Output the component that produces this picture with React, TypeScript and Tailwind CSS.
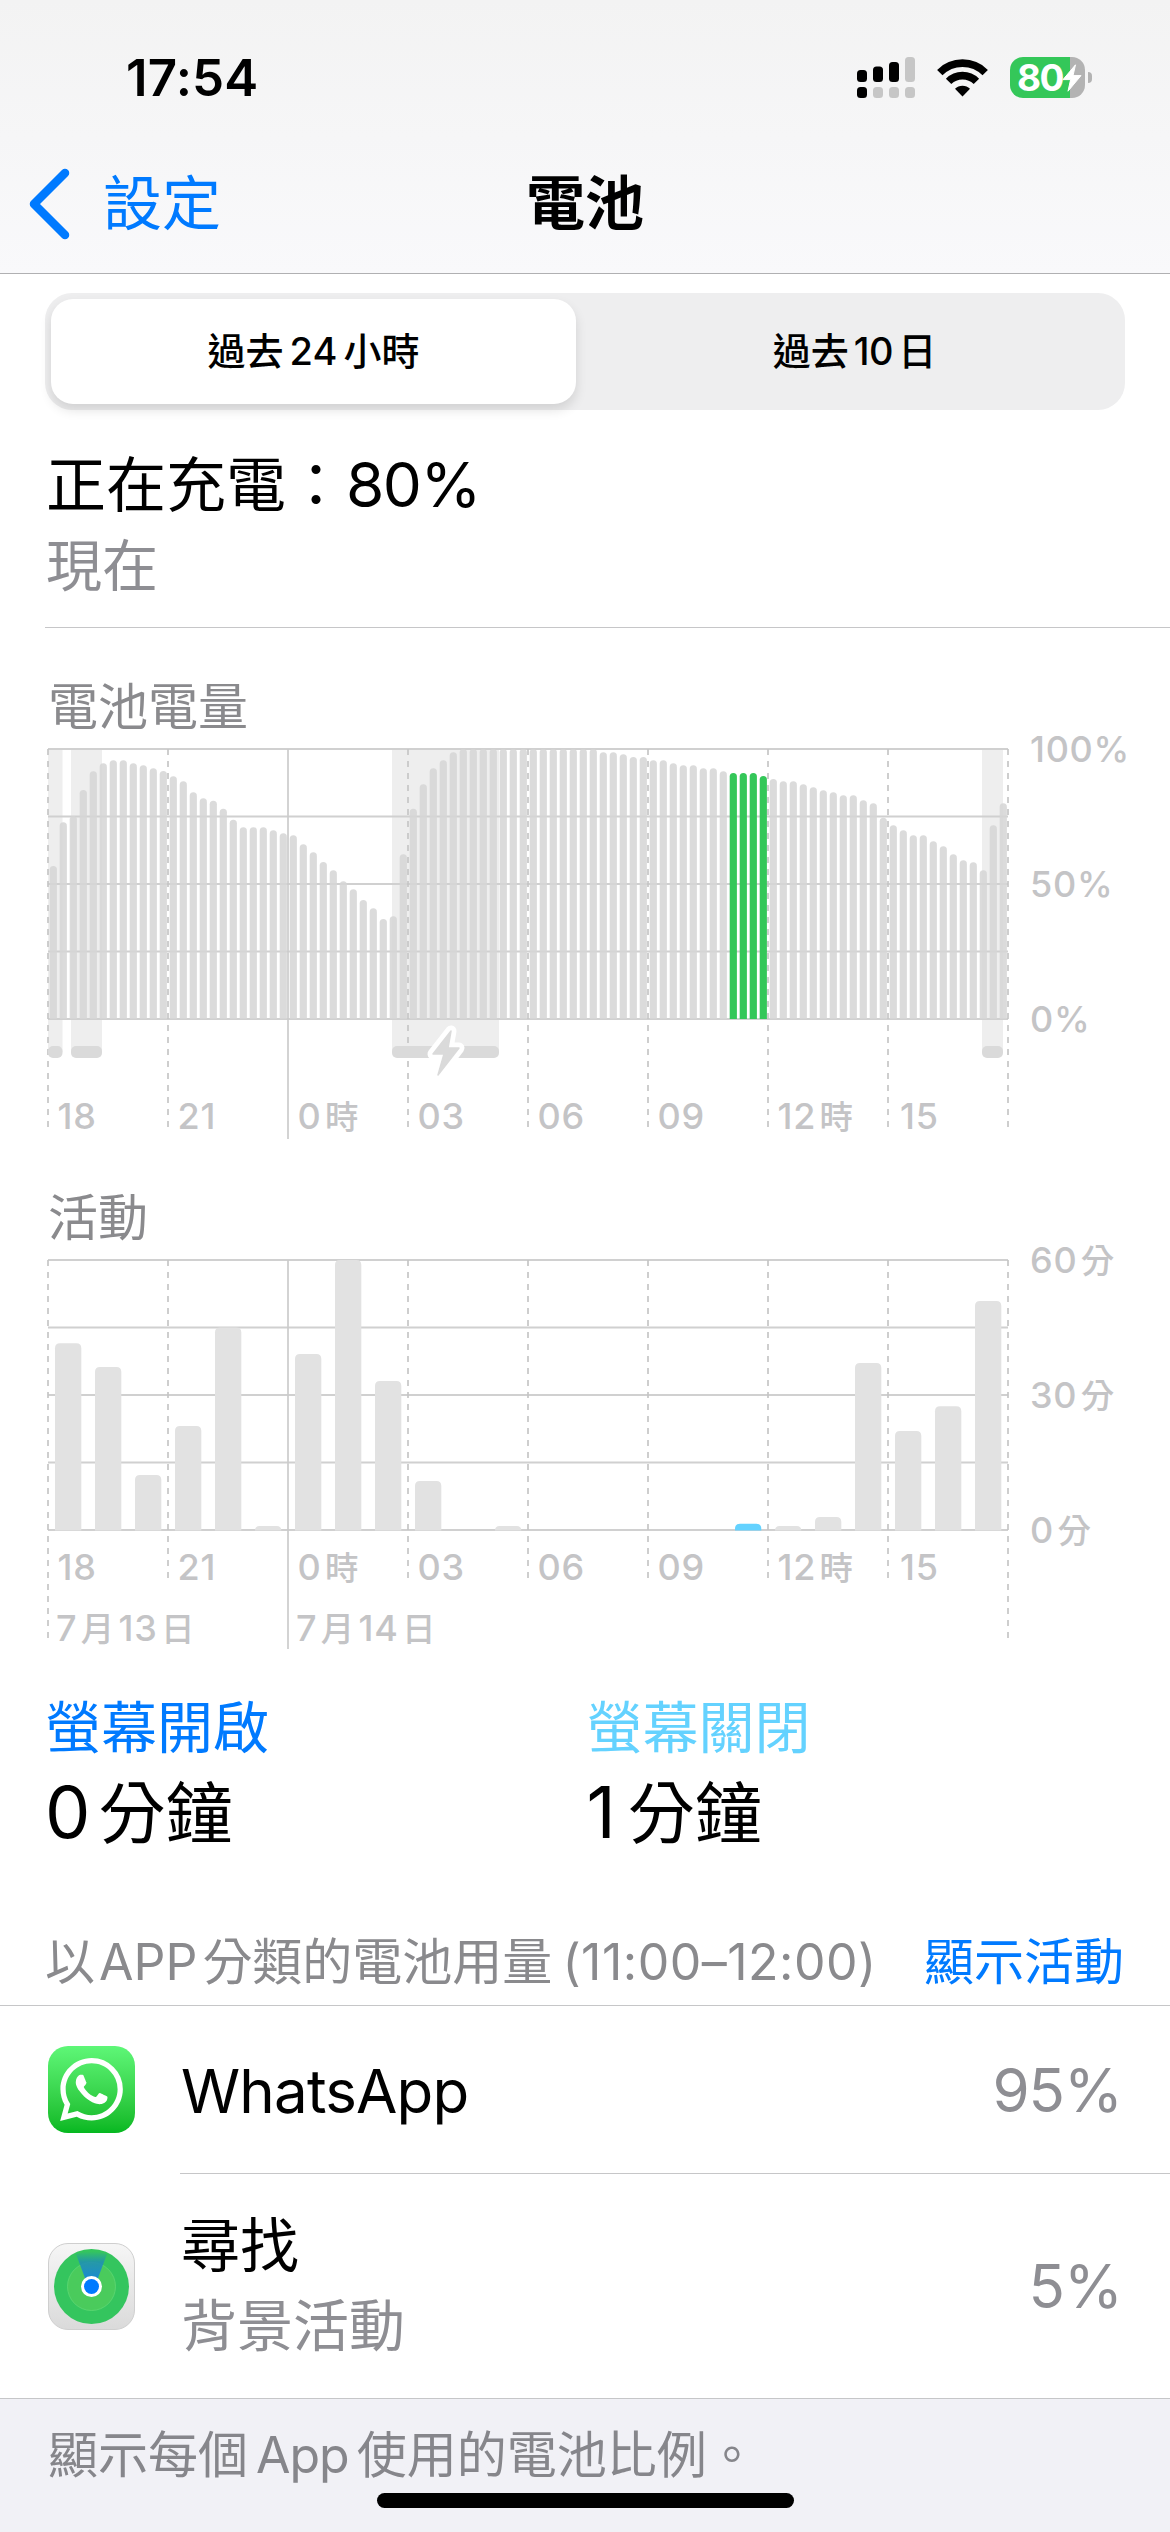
import React from "react";
import { SiWhatsapp } from "react-icons/si";

const LEFT = 48;
const LEVEL_TOP = 749;
const ACTIVITY_TOP = 1260;
const PLOT_H = 270;

// Battery level every fifteen minutes, as the bar's distance from 100 % in thirds of a pixel.
const LEVEL_DROPS = [
  351, 220, 201, 123, 67, 43, 34, 34, 43, 49, 58, 66,
  82, 97, 130, 148, 155, 179, 212, 235, 235, 235, 244, 253,
  259, 286, 310, 339, 364, 397, 421, 453, 478, 510, 502, 316,
  179, 106, 58, 34, 10, 0, 0, 0, 0, 0, 0, 0,
  0, 0, 0, 0, 0, 0, 0, 10, 10, 16, 24, 24,
  34, 34, 43, 49, 49, 58, 58, 67, 72, 72, 72, 81,
  90, 97, 97, 106, 115, 124, 130, 139, 139, 154, 163, 206,
  229, 244, 259, 259, 277, 292, 316, 334, 340, 364, 229, 163,
];

const CHARGING = [
  { x: 48, w: 14.5 },
  { x: 71, w: 31 },
  { x: 392, w: 107 },
  { x: 982, w: 21 },
];

// Minutes of activity for each hour.
const ACTIVITY = [
  41.5, 36.2, 12.2, 23.1, 45, 0.9, 39.1, 60, 33.1, 10.9, 0, 0.9,
  0, 0, 0, 0, 0, 1.4, 0.9, 2.9, 37.1, 22, 27.5, 50.9,
];

const HOURS = ["18", "21", "0時", "03", "06", "09", "12時", "15"];

function roundedTop(x: number, y: number, w: number, bottom: number, r: number) {
  const k = Math.min(r, bottom - y);
  return `M${x} ${bottom}V${y + k}Q${x} ${y} ${x + k} ${y}H${x + w - k}Q${x + w} ${y} ${x + w} ${y + k}V${bottom}Z`;
}

function AxisText({ x, cy, text }: { x: number; cy: number; text: string }) {
  const parts = text.split(/([月日時分])/).filter(Boolean);
  return (
    <text x={x} y={cy + 13} fontSize={36} fontWeight={500} fill="#c4c4c6" letterSpacing={0.7}>
      {parts.map((t, i) => (
        <tspan key={i} dx={i ? 3.5 : 0} fontSize={/[月日時分]/.test(t) ? 33.5 : 36}>
          {t}
        </tspan>
      ))}
    </text>
  );
}

function Grid({ top, dashEnd, edgeEnd, solidEnd }: { top: number; dashEnd: number; edgeEnd: number; solidEnd: number }) {
  return (
    <g>
      <g stroke="#d0d0d0" strokeWidth={2}>
        {[0, 1, 2, 3, 4].map((i) => (
          <line key={i} x1={LEFT} x2={1008} y1={top + i * 67.5} y2={top + i * 67.5} />
        ))}
      </g>
      <g stroke="#c6c6c6" strokeWidth={1.7}>
        {Array.from({ length: 9 }, (_, i) => {
          const x = LEFT + i * 120;
          const end = i === 2 ? solidEnd : i === 0 || i === 8 ? edgeEnd : dashEnd;
          return (
            <line
              key={x}
              x1={x}
              x2={x}
              y1={top}
              y2={end}
              stroke={i === 2 ? "#cccccc" : undefined}
              strokeDasharray={i === 2 ? undefined : "6 6"}
            />
          );
        })}
      </g>
    </g>
  );
}

function HourLabels({ cy }: { cy: number }) {
  return (
    <>
      {HOURS.map((h, i) => (
        <AxisText key={h} x={(h === "15" ? 60 : 57.5) + i * 120} cy={cy} text={h} />
      ))}
    </>
  );
}

function LevelChart() {
  const bottom = LEVEL_TOP + PLOT_H;
  const bolt = "M451 1031L433 1054H444L438 1075L459 1048H448Z";
  return (
    <svg className="block overflow-visible" width="1170" height="410" viewBox="0 737 1170 410">
      {CHARGING.map((c) => (
        <rect key={c.x} x={c.x} y={LEVEL_TOP} width={c.w} height={303} fill="#eeeeee" />
      ))}
      <Grid top={LEVEL_TOP} dashEnd={1133} edgeEnd={1133} solidEnd={1139} />
      {LEVEL_DROPS.map((d, i) => {
        const selected = i >= 68 && i < 72;
        return (
          <path
            key={i}
            d={roundedTop(49.7 + i * 10, LEVEL_TOP + d / 3, 7.2, bottom, 3.6)}
            fill={selected ? "#34c759" : "#d5d5d5"}
            opacity={selected ? 1 : 0.86}
          />
        );
      })}
      {CHARGING.map((c) => (
        <rect key={c.x} x={c.x} y={1046} width={c.w} height={12} rx={5} fill="#dadada" />
      ))}
      <path d={bolt} fill="#fff" stroke="#fff" strokeWidth={11} strokeLinejoin="round" />
      <path d={bolt} fill="#dadada" stroke="#dadada" strokeWidth={1.5} strokeLinejoin="round" />
      <AxisText x={1030} cy={749} text="100%" />
      <AxisText x={1030} cy={884} text="50%" />
      <AxisText x={1030} cy={1019} text="0%" />
      <HourLabels cy={1116} />
    </svg>
  );
}

function ActivityChart() {
  const bottom = ACTIVITY_TOP + PLOT_H;
  return (
    <svg className="block overflow-visible" width="1170" height="404" viewBox="0 1248 1170 404">
      <Grid top={ACTIVITY_TOP} dashEnd={1584} edgeEnd={1643} solidEnd={1649} />
      {ACTIVITY.map((m, i) =>
        m ? (
          <path
            key={i}
            d={roundedTop(55 + i * 40, bottom - m * 4.5, 26.3, bottom + 0.5, 5)}
            fill={i === 17 ? "#64d2ff" : "#e2e2e2"}
          />
        ) : null
      )}
      <AxisText x={1030} cy={1260} text="60分" />
      <AxisText x={1030} cy={1395} text="30分" />
      <AxisText x={1030} cy={1530} text="0分" />
      <HourLabels cy={1567} />
      <AxisText x={56} cy={1628} text="7月13日" />
      <AxisText x={296} cy={1628} text="7月14日" />
    </svg>
  );
}

function StatusIcons() {
  const signal = [
    { x: 0, y: 13, on: true },
    { x: 16, y: 9.5, on: true },
    { x: 32, y: 5, on: true },
    { x: 48, y: 0, on: false },
  ];
  return (
    <div className="flex items-center">
      <svg width="58" height="41" viewBox="0 0 58 41">
        {signal.map((s, i) => (
          <g key={s.x}>
            <rect x={s.x} y={s.y} width="10" height={25 - s.y} rx="3.5" fill={s.on ? "#000" : "#c6c6c6"} />
            <rect x={s.x} y="30" width="10" height="11" rx="3.5" fill={i === 0 ? "#000" : "#c6c6c6"} />
          </g>
        ))}
      </svg>
      <svg className="ml-[22px]" width="51" height="38" viewBox="0 0 51 38">
        <g fill="none" stroke="#000" strokeWidth="7.6">
          <path d="M2.8 13.6A32 32 0 0 1 48.2 13.6" />
          <path d="M11.6 22.4A19.6 19.6 0 0 1 39.4 22.4" />
        </g>
        <path d="M25.5 37.5L18 29.8A10.6 10.6 0 0 1 33 29.8Z" />
      </svg>
      <div className="relative ml-[22px] flex h-[41px] w-[75px] items-center rounded-[13px] bg-linear-to-r from-[#34c759] from-80% to-[#b3b3b3] to-80%">
        <span className="ml-[7px] text-[37px] leading-[41px] font-bold tracking-[-1.5px] text-white">80</span>
        <svg className="absolute top-[7px] left-[52px]" width="20" height="28" viewBox="0 0 20 28">
          <path d="M13.5 0.8L1 15.6H8.6L6 27.2L19 11.6H11Z" fill="#fff" stroke="#fff" strokeLinejoin="round" />
        </svg>
      </div>
      <div className="ml-[3px] h-[11px] w-[4px] rounded-r-full bg-[#b3b3b3]" />
    </div>
  );
}

function FindMyIcon() {
  return (
    <svg width="87" height="87" viewBox="0 0 87 87">
      <defs>
        <linearGradient id="fm-bg" x1="0" y1="0" x2="0" y2="1">
          <stop offset="0" stopColor="#f6f6f6" />
          <stop offset="1" stopColor="#dadada" />
        </linearGradient>
        <linearGradient id="fm-beam" x1="0" y1="0" x2="0" y2="1">
          <stop offset="0" stopColor="#1f8fb4" stopOpacity="0" />
          <stop offset="0.4" stopColor="#1f8fb4" stopOpacity="0.85" />
          <stop offset="1" stopColor="#1a8bd0" />
        </linearGradient>
      </defs>
      <rect x="0.5" y="0.5" width="86" height="86" rx="19.5" fill="url(#fm-bg)" stroke="#cfcfcf" />
      <circle cx="43.5" cy="43.5" r="37.5" fill="#34c55e" />
      <circle cx="43.5" cy="43.5" r="24" fill="#4acb5c" stroke="#5fd873" strokeWidth="0.8" />
      <path d="M37 35L28 11Q43.5 6 59 11L50 35Z" fill="url(#fm-beam)" />
      <circle cx="43.5" cy="43.5" r="10.5" fill="#fff" />
      <circle cx="43.5" cy="43.5" r="7.5" fill="#007aff" />
    </svg>
  );
}

export default function App() {
  return (
    <div className="flex h-[2532px] w-[1170px] flex-col overflow-hidden bg-white font-['Inter','Noto_Sans_CJK_TC',sans-serif] text-black">
      <header className="h-[274px] shrink-0 border-b border-[#b0b0b2] bg-linear-to-b from-[#f3f3f3] to-[#f9f9fb] pt-[47px]">
        <div className="flex h-[61px] items-center justify-between pr-[78px] pl-[126px]">
          <span className="text-[51px] leading-[60px] font-semibold tracking-[0.2px]">17:54</span>
          <StatusIcons />
        </div>
        <div className="mt-[40px] grid h-[111px] grid-cols-3 items-center">
          <div className="flex items-center gap-[32px] pl-[28px] text-[#007aff]">
            <svg width="43" height="72" viewBox="0 0 43 72">
              <path d="M37 5L6 36L37 67" fill="none" stroke="currentColor" strokeWidth="8.5" strokeLinecap="round" strokeLinejoin="round" />
            </svg>
            <span className="text-[59px] leading-[80px]">設定</span>
          </div>
          <h1 className="text-center text-[59px] leading-[80px] font-semibold">電池</h1>
        </div>
      </header>

      <main className="flex flex-col">
        <div className="mx-[45px] mt-[19px] flex h-[117px] rounded-[27px] bg-[#eeeeef] p-[6px] text-[38px] font-medium">
          <div className="flex w-[525px] items-center justify-center rounded-[22px] bg-white shadow-[0_6px_12px_rgba(0,0,0,0.12)]">
            過去<span className="mx-[6px]">24</span>小時
          </div>
          <div className="flex flex-1 items-center justify-center pl-[14px]">
            過去<span className="mx-[5px] tracking-[-0.5px]">10</span>日
          </div>
        </div>

        <div className="mt-[35px] ml-[45px] h-[183px] border-b border-[#c6c6c8] pl-[1px]">
          <div className="text-[60px] leading-[80px]">
            正在充電：<span className="text-[62px] tracking-[-1.5px]">80%</span>
          </div>
          <div className="text-[56px] leading-[83px] text-[#8e8e93]">現在</div>
        </div>

        <h2 className="mt-[49px] h-[60px] pl-[48px] text-[50px] leading-[61px] text-[#8a8a8d]">電池電量</h2>
        <LevelChart />
        <h2 className="mt-[41px] h-[60px] pl-[48px] text-[50px] leading-[61px] text-[#8a8a8d]">活動</h2>
        <ActivityChart />

        <div className="mt-[46px] grid grid-cols-2 pl-[45px]">
          <div>
            <div className="text-[56px] leading-[60px] text-[#007aff]">螢幕開啟</div>
            <div className="mt-[14px] text-[67px] leading-[80px]">
              <span className="mr-[8px] text-[72px]">0</span>分鐘
            </div>
          </div>
          <div className="-ml-[21px]">
            <div className="text-[56px] leading-[60px] text-[#64d2ff]">螢幕關閉</div>
            <div className="mt-[14px] text-[67px] leading-[80px]">
              <span className="mr-[12px] text-[72px]">1</span>分鐘
            </div>
          </div>
        </div>

        <div className="mt-[67px] flex h-[85px] items-start justify-between border-b border-[#c6c6c8] pr-[46px] pl-[45px] text-[50px] leading-[83px] whitespace-nowrap">
          <span className="text-[#8a8a8d]">
            以<span className="mr-[5px] ml-[4px]">APP</span>分類的電池用量<span className="ml-[10px] tracking-[0.5px]">(11:00–12:00)</span>
          </span>
          <span className="text-[#007aff]">顯示活動</span>
        </div>

        <div className="flex h-[167px] items-center pl-[48px]">
          <div className="flex size-[87px] items-center justify-center rounded-[20px] bg-linear-to-b from-[#5ef777] to-[#04b820]">
            <SiWhatsapp className="size-[63px] text-white" />
          </div>
          <div className="ml-[46px] flex flex-1 items-center justify-between pr-[48px] text-[60px] leading-[80px]">
            <span className="pt-[3px] tracking-[-0.8px]">WhatsApp</span>
            <span className="tracking-[-1px] text-[#8e8e93]">95%</span>
          </div>
        </div>
        <div className="ml-[180px] h-px bg-[#c6c6c8]" />
        <div className="flex h-[224px] items-center pl-[48px]">
          <FindMyIcon />
          <div className="ml-[46px] flex flex-1 items-center justify-between pr-[48px]">
            <div>
              <div className="text-[59px] leading-[80px]">尋找</div>
              <div className="text-[56px] leading-[80px] text-[#8e8e93]">背景活動</div>
            </div>
            <span className="text-[60px] tracking-[-1px] text-[#8e8e93]">5%</span>
          </div>
        </div>
      </main>

      <footer className="flex flex-1 flex-col items-center border-t border-[#c6c6c8] bg-[#f1f1f6]">
        <p className="mt-[18px] h-[76px] self-start pl-[48px] text-[50px] leading-[76px] text-[#86868b]">
          顯示每個<span className="mx-[8px] tracking-[-1px]">App</span>使用的電池比例。
        </p>
        <div className="h-[15px] w-[417px] rounded-full bg-black" />
      </footer>
    </div>
  );
}
